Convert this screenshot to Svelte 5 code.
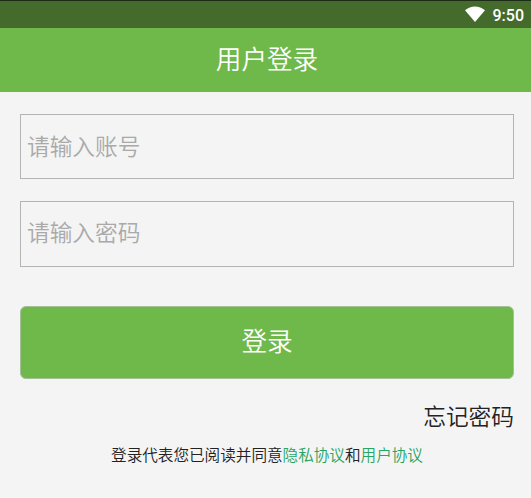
<script lang="ts">
  let account = $state('');
  let password = $state('');

  function handleSubmit(event: SubmitEvent) {
    event.preventDefault();
  }
</script>

<div class="screen">
  <div class="status-bar">
    <svg class="wifi" viewBox="0 0 20 16" aria-hidden="true">
      <path d="M0 4.2C5.8-.9 14.2-.9 20 4.2L10 16Z" fill="#fff" />
    </svg>
    <span class="time">9:50</span>
  </div>

  <header class="title-bar">
    <h1>用户登录</h1>
  </header>

  <form class="login-form" onsubmit={handleSubmit}>
    <input class="field" type="text" placeholder="请输入账号" aria-label="账号" bind:value={account} />
    <input class="field password" type="password" placeholder="请输入密码" aria-label="密码" bind:value={password} />
    <button class="submit" type="submit">登录</button>
    <button class="forgot" type="button">忘记密码</button>
  </form>

  <p class="agreement">
    登录代表您已阅读并同意<span class="link">隐私协议</span>和<span class="link">用户协议</span>
  </p>
</div>

<style>
  :global(body) {
    background: #f4f4f4;
  }

  .screen {
    display: flex;
    flex-direction: column;
    height: 498px;
    overflow: hidden;
    background: #f4f4f4;
    font-family: 'Noto Sans CJK SC', sans-serif;
    font-weight: 350;
    color: #222;
  }

  .status-bar {
    display: flex;
    align-items: flex-start;
    justify-content: flex-end;
    gap: 8px;
    height: 28px;
    padding: 5px 7px 0 0;
    box-sizing: border-box;
    border-top: 1px solid #1d2c16;
    background: #446b2c;
    color: #fff;
  }

  .wifi {
    width: 20px;
    height: 16px;
  }

  .time {
    font: 500 16px/20px Roboto, sans-serif;
  }

  .title-bar {
    display: flex;
    align-items: center;
    justify-content: center;
    height: 64px;
    padding: 0 0 4px 3px;
    box-sizing: border-box;
    background: #6fb84a;
  }

  h1 {
    margin: 0;
    font-size: 25.6px;
    font-weight: inherit;
    line-height: 36px;
    color: #fff;
  }

  .login-form {
    display: flex;
    flex-direction: column;
    padding: 22px 17px 0 20px;
  }

  .field {
    height: 65px;
    box-sizing: border-box;
    padding: 0 6px 2px;
    border: 1px solid #b4b4b4;
    border-radius: 0;
    outline: none;
    background: transparent;
    font-family: inherit;
    font-size: 22.7px;
    font-weight: inherit;
    color: #222;
  }

  .field::placeholder {
    color: #a9a9a9;
    opacity: 1;
  }

  .password {
    height: 66px;
    margin-top: 22px;
    padding-bottom: 6px;
  }

  .submit {
    height: 73px;
    margin-top: 39px;
    padding: 0 0 6px;
    border: 1px solid #a5bf98;
    border-radius: 6px;
    background: #6fb84a;
    font-family: inherit;
    font-size: 25.6px;
    font-weight: inherit;
    color: #fff;
  }

  .forgot {
    align-self: flex-end;
    margin-top: 21px;
    padding: 0;
    border: none;
    background: none;
    font-family: inherit;
    font-size: 22.7px;
    font-weight: inherit;
    line-height: 32px;
    color: #222;
  }

  .agreement {
    margin: 11px 0 0 3px;
    font-size: 15.6px;
    line-height: 22px;
    text-align: center;
  }

  .link {
    color: #27a566;
  }
</style>
